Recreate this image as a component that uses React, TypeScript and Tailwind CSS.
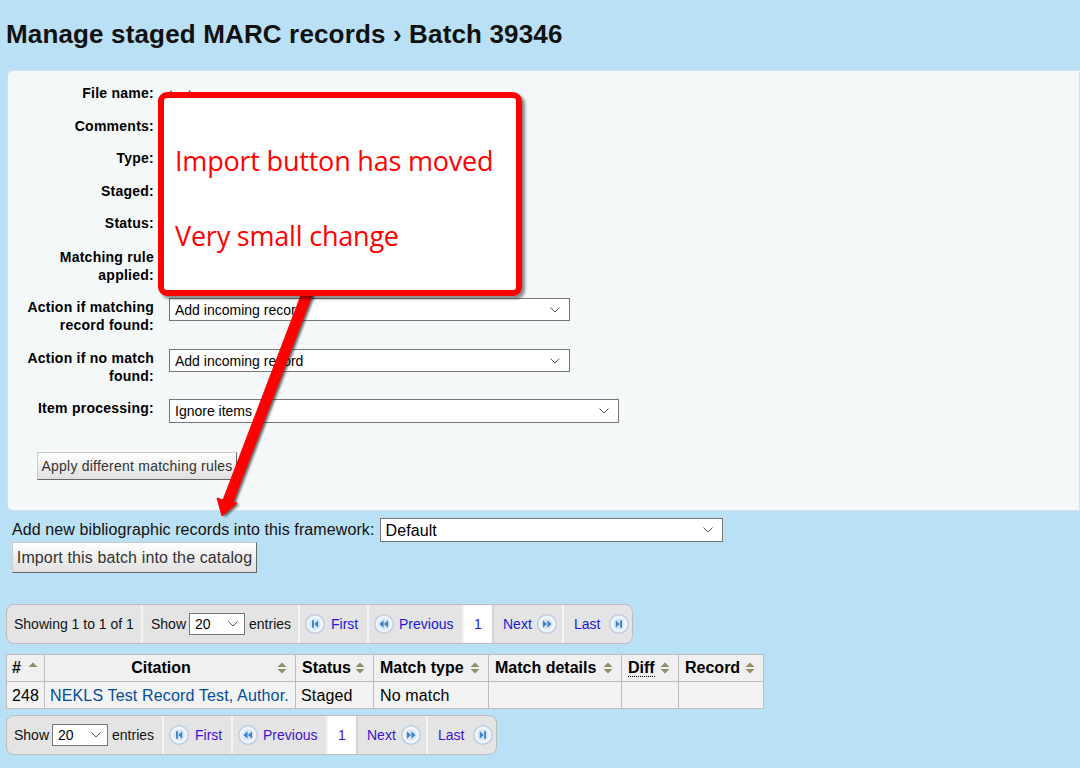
import type { ReactNode } from "react";

function PageIcon({ kind }: { kind: "first" | "prev" | "next" | "last" }) {
  const glyph = {
    first: "M6.3 5.6h1.7v6.8H6.3zM8.4 9l3.5-3.4v6.8z",
    prev: "M4.9 9l3.7-3.4v6.8zM9 9l3.7-3.4v6.8z",
    next: "M5.3 5.6L9 9l-3.7 3.4zM9.4 5.6L13.1 9l-3.7 3.4z",
    last: "M6.1 5.6L9.6 9l-3.5 3.4zM10 5.6h1.7v6.8H10z",
  }[kind];
  return (
    <svg width="20" height="20" viewBox="0 0 18 18" className="shrink-0">
      <defs>
        <radialGradient id={`pg-${kind}`} cx="50%" cy="50%" r="50%">
          <stop offset="0%" stopColor="#cfe0f4" />
          <stop offset="58%" stopColor="#dfeaf7" />
          <stop offset="70%" stopColor="#fbfdff" />
          <stop offset="84%" stopColor="#dfe8f3" />
          <stop offset="100%" stopColor="#a4b9d6" />
        </radialGradient>
      </defs>
      <circle cx="9" cy="9" r="8.8" fill={`url(#pg-${kind})`} />
      <path d={glyph} fill="#3f83c9" />
    </svg>
  );
}

function SortIcon({ up = true, down = true }: { up?: boolean; down?: boolean }) {
  return (
    <svg width="10" height="12" viewBox="0 0 10 12" className="shrink-0">
      {up && <path d="M5 0.5L9.5 5H0.5z" fill="#8f9068" />}
      {down && <path d="M5 11.5L0.5 7H9.5z" fill="#8f9068" />}
    </svg>
  );
}

function PagerCell({ className, children }: { className: string; children: ReactNode }) {
  return <div className={`flex items-center border-r-2 border-[#f4f4f4] ${className}`}>{children}</div>;
}

function Pager({ showing, linkClass }: { showing: boolean; linkClass: string }) {
  return (
    <div className="flex h-[40px] w-fit overflow-hidden rounded-[8px] border border-[#bdbdbd] bg-[#e4e4e4] text-[14px] text-[#111]">
      {showing && <PagerCell className="w-[136px] pl-[7px]">Showing 1 to 1 of 1</PagerCell>}
      <PagerCell className={`w-[157px] gap-[4px] ${showing ? "pl-[8px]" : "pl-[7px]"}`}>
        <span className="-mr-[1px]">Show</span>
        <Select value="20" className="w-[56px]" height="h-[22px]" chevron="right-[7px]" />
        <span>entries</span>
      </PagerCell>
      <PagerCell className={`w-[69px] gap-[6px] pl-[5px] ${linkClass}`}>
        <PageIcon kind="first" />
        First
      </PagerCell>
      <PagerCell className={`w-[95px] gap-[5px] pl-[5px] ${linkClass}`}>
        <PageIcon kind="prev" />
        Previous
      </PagerCell>
      <div className={`flex w-[30px] items-center justify-center border-r-2 border-[#d4d4d4] bg-white ${linkClass}`}>1</div>
      <PagerCell className={`w-[70px] gap-[5px] pl-[9px] ${linkClass}`}>
        Next
        <PageIcon kind="next" />
      </PagerCell>
      <div className={`flex w-[68px] items-center gap-[9px] pl-[10px] ${linkClass}`}>
        Last
        <PageIcon kind="last" />
      </div>
    </div>
  );
}

function Field({ label, className, children }: { label: ReactNode; className: string; children?: ReactNode }) {
  return (
    <div className={`flex ${className}`}>
      <div className="w-[146px] shrink-0 text-right text-[14px] leading-[18px] font-bold tracking-[0.25px] text-black">{label}</div>
      <div className="ml-[15px] text-[14px] leading-[18px]">{children}</div>
    </div>
  );
}

function Select({
  value,
  className,
  height,
  size = "text-[14px]",
  chevron = "right-[10px]",
}: {
  value: string;
  className: string;
  height: string;
  size?: string;
  chevron?: string;
}) {
  return (
    <span className={`relative block ${className}`}>
      <select className={`block w-full appearance-none border border-[#767676] bg-white pl-[5px] text-black ${height} ${size}`}>
        <option>{value}</option>
      </select>
      <svg width="10" height="6" viewBox="0 0 10 6" className={`pointer-events-none absolute top-1/2 -mt-[3px] ${chevron}`}>
        <path d="M0.5 0.5L5 5L9.5 0.5" fill="none" stroke="#555" strokeWidth="1" />
      </svg>
    </span>
  );
}

const headers = [
  { label: "Citation", width: "w-[251px]", center: true },
  { label: "Status", width: "w-[78px]" },
  { label: "Match type", width: "w-[115px]" },
  { label: "Match details", width: "w-[133px]" },
  { label: "Diff", width: "w-[57px]" },
  { label: "Record", width: "w-[85px]" },
];

export default function App() {
  return (
    <div className="relative h-[768px] w-[1080px] overflow-hidden bg-[#b9e0f4] font-['Liberation_Sans',Arial,sans-serif] text-black">
      <h1 className="pt-[18px] pl-[6px] text-[26px] leading-[32px] font-bold tracking-[0.15px] text-[#111]">
        Manage staged MARC records › Batch 39346
      </h1>

      <div className="mt-[20px] ml-[7px] h-[441px] rounded-l-[6px] border border-[#cfe0e8] bg-[#f4f8f9] pt-[13px]">
        <Field label="File name:" className="mb-[15px]">
          <span className="relative top-[2px]">test</span>
        </Field>
        <Field label="Comments:" className="mb-[14px]" />
        <Field label="Type:" className="mb-[15px]" />
        <Field label="Staged:" className="mb-[14px]" />
        <Field label="Status:" className="mb-[16px]" />
        <Field label={<>Matching rule<br />applied:</>} className="mb-[14px]" />
        <Field label={<>Action if matching<br />record found:</>} className="mb-[15px]">
          <Select value="Add incoming record" className="w-[401px]" height="h-[23px]" />
        </Field>
        <Field label={<>Action if no match<br />found:</>} className="mb-[14px]">
          <Select value="Add incoming record" className="w-[401px]" height="h-[23px]" />
        </Field>
        <Field label="Item processing:" className="mb-[29px]">
          <Select value="Ignore items" className="w-[450px]" height="h-[24px]" />
        </Field>
        <button className="ml-[29px] h-[28px] w-[200px] border border-[#cccccc] border-r-[#666] border-b-[#666] bg-gradient-to-b from-white to-[#e0e0e0] text-[14px] tracking-[0.23px] text-[#333]">
          Apply different matching rules
        </button>
      </div>

      <div className="mt-[7px] ml-[12px] flex items-center gap-[5px] text-[16px] tracking-[0.1px] text-[#111]">
        <span>Add new bibliographic records into this framework:</span>
        <Select value="Default" className="w-[343px]" height="h-[24px]" size="text-[16px]" />
      </div>
      <button className="ml-[12px] block h-[31px] w-[245px] border border-[#cccccc] border-r-[#666] border-b-[#666] bg-gradient-to-b from-white to-[#e0e0e0] text-[16px] tracking-[0.12px] text-[#333]">
        Import this batch into the catalog
      </button>

      <div className="mt-[31px] ml-[6px]">
        <Pager showing linkClass="text-[#1a1ad6]" />

        <table className="mt-[10px] w-[757px] table-fixed border-collapse text-[16px]">
          <thead>
            <tr className="h-[27px] bg-[#f0f0f0]">
              <th className="w-[38px] border border-[#bdbdbd] pl-[5px] text-left">
                <span className="flex items-center gap-[7px]">#<SortIcon down={false} /></span>
              </th>
              {headers.map((h) => (
                <th key={h.label} className={`${h.width} border border-[#bdbdbd] pr-[8px] pl-[6px]`}>
                  <span className="flex items-center justify-between gap-[4px]">
                    <span className={`${h.center ? "flex-1 pr-[2px] text-center" : ""} ${h.label === "Diff" ? "border-b border-dotted border-black leading-[16px]" : ""}`}>{h.label}</span>
                    <SortIcon />
                  </span>
                </th>
              ))}
            </tr>
          </thead>
          <tbody className="tracking-[0.15px]">
            <tr className="h-[27px] bg-[#f3f3f3]">
              <td className="border border-[#bdbdbd] pt-[1px] pl-[5px]">248</td>
              <td className="border border-[#bdbdbd] pt-[1px] pl-[5px] whitespace-nowrap text-[#004d99]">NEKLS Test Record Test, Author.</td>
              <td className="border border-[#bdbdbd] pt-[1px] pl-[5px]">Staged</td>
              <td className="border border-[#bdbdbd] pt-[1px] pl-[6px]">No match</td>
              <td className="border border-[#bdbdbd]"></td>
              <td className="border border-[#bdbdbd]"></td>
              <td className="border border-[#bdbdbd]"></td>
            </tr>
          </tbody>
        </table>

        <div className="mt-[6px]">
          <Pager showing={false} linkClass="text-[#3f12d0]" />
        </div>
      </div>

      {/* arrow annotation */}
      <svg className="absolute top-0 left-0" width="1080" height="768" viewBox="0 0 1080 768">
        <defs>
          <filter id="arrow-shadow" x="-20%" y="-20%" width="140%" height="140%">
            <feGaussianBlur stdDeviation="0.9" />
          </filter>
        </defs>
        <path
          d="M303 290H314L233 502L237 503L222 516L217 498L223 500z"
          fill="#222"
          opacity="0.65"
          filter="url(#arrow-shadow)"
          transform="translate(2.5 1.5)"
        />
        <path d="M303 290H314L233 502L237 503L222 516L217 498L223 500z" fill="#ff0000" stroke="#ff0000" strokeLinejoin="round" />
      </svg>

      {/* callout */}
      <div className="absolute top-[92px] left-[158px] flex h-[204px] w-[364px] flex-col rounded-[9px] border-[6px] border-[#ff0000] bg-white pt-[44px] pl-[11px] font-['Open_Sans',sans-serif] text-[27px] leading-[38px] tracking-[-0.2px] text-[#ff0000] shadow-[3px_3px_3px_rgba(0,0,0,0.45)]">
        <p>Import button has moved</p>
        <p className="mt-[37px]">Very small change</p>
      </div>
    </div>
  );
}
